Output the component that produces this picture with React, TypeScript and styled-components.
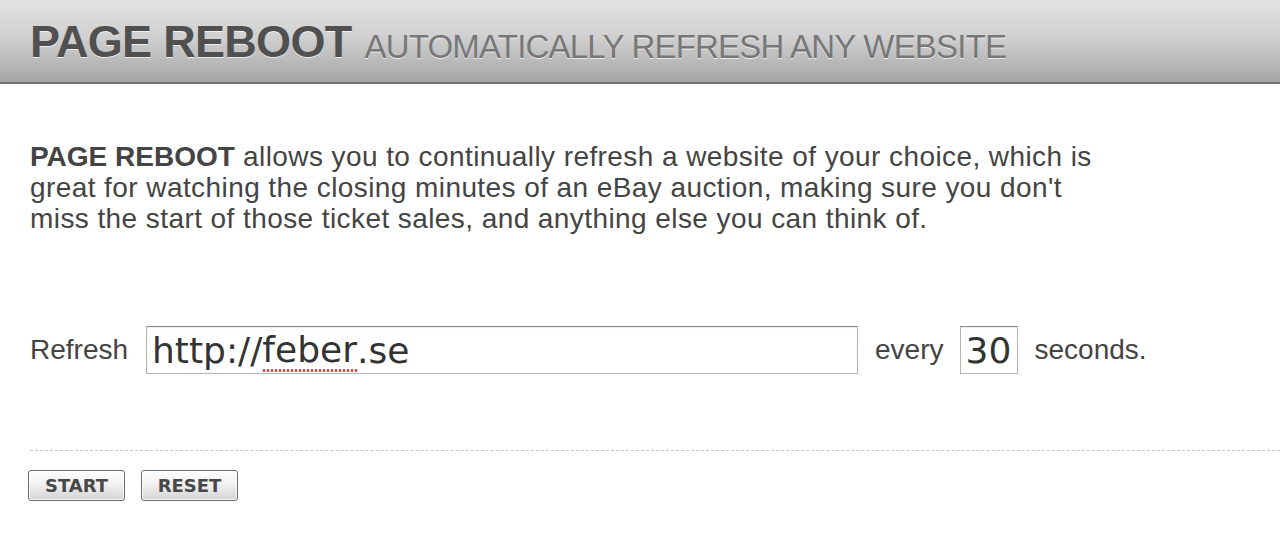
import React from "react";
import styled, { createGlobalStyle } from "styled-components";

const Global = createGlobalStyle`
  html, body { margin: 0; padding: 0; background: #fff; }
  body { font-family: "Liberation Sans", Arial, sans-serif; color: #444; }
`;

const Header = styled.header`
  height: 84px;
  box-sizing: border-box;
  background: linear-gradient(to bottom, #e2e2e1 0%, #d0d0d0 45%, #a6a6a6 100%);
  border-bottom: 2px solid #707070;
  display: flex;
  align-items: flex-end;
  padding: 0 0 18px 30px;
  gap: 13px;
`;

const Title = styled.h1`
  margin: 0;
  font-family: "Liberation Sans", Arial, sans-serif;
  font-weight: bold;
  font-size: 45px;
  line-height: 1;
  letter-spacing: -0.7px;
  color: #505050;
  text-shadow: 0 1px 0 rgba(255, 255, 255, 0.7);
`;

const Subtitle = styled.span`
  font-family: "Liberation Sans", Arial, sans-serif;
  font-size: 33px;
  line-height: 1;
  letter-spacing: -0.8px;
  color: #777;
  padding-bottom: 1px;
  text-shadow: 0 1px 0 rgba(255, 255, 255, 0.7);
`;

const Main = styled.main`
  padding: 57px 30px 0 30px;
`;

const Intro = styled.p`
  margin: 0;
  font-size: 28px;
  line-height: 31px;
  color: #444;
  letter-spacing: 0.42px;
  white-space: pre-line;
`;

const Strong = styled.b`
  letter-spacing: 0;
`;

const Form = styled.div`
  display: flex;
  align-items: center;
  margin-top: 92px;
  font-size: 28px;
  color: #444;
`;

const Label = styled.span<{ $gap: number }>`
  margin-right: ${(p) => p.$gap}px;
`;

const Field = styled.div<{ $width: number }>`
  box-sizing: border-box;
  width: ${(p) => p.$width}px;
  height: 48px;
  border: 1px solid #b4b4b4;
  border-top-color: #8a8a8a;
  box-shadow: inset 0 1px 1px rgba(0, 0, 0, 0.08);
  background: #fff;
  display: flex;
  align-items: center;
  padding: 0 5px;
  font-family: "DejaVu Sans", Verdana, sans-serif;
  font-size: 36px;
  color: #333;
  margin-right: 17px;
  white-space: nowrap;
`;

const Misspelled = styled.span`
  background-image: radial-gradient(circle, #ff3b3b 1.1px, transparent 1.6px);
  background-repeat: repeat-x;
  background-position: 0 100%;
  background-size: 4px 3px;
  padding-bottom: 2px;
`;

const Divider = styled.hr`
  border: 0;
  border-top: 1px dashed #c8c8c8;
  margin: 76px -30px 0 0;
`;

const Buttons = styled.div`
  display: flex;
  gap: 18px;
  margin-top: 19px;
`;

const Button = styled.button`
  box-sizing: border-box;
  height: 31px;
  width: 97px;
  margin-left: -2px;
  border: 1px solid #6c6c6c;
  border-radius: 3px;
  background: linear-gradient(to bottom, #ffffff 0%, #f1f1f1 45%, #d4d4d4 100%);
  box-shadow: inset 0 0 0 1px rgba(255, 255, 255, 0.8);
  font-family: "DejaVu Sans", Verdana, sans-serif;
  font-weight: bold;
  font-size: 18px;
  color: #484848;
  padding: 0;
  cursor: pointer;
`;

export default function App() {
  return (
    <>
      <Global />
      <Header>
        <Title>PAGE REBOOT</Title>
        <Subtitle>AUTOMATICALLY REFRESH ANY WEBSITE</Subtitle>
      </Header>
      <Main>
        <Intro>
          <Strong>PAGE REBOOT</Strong>
          {" allows you to continually refresh a website of your choice, which is\ngreat for watching the closing minutes of an eBay auction, making sure you don't\nmiss the start of those ticket sales, and anything else you can think of."}
        </Intro>
        <Form>
          <Label $gap={18}>Refresh</Label>
          <Field $width={712} role="textbox">
            http://<Misspelled>feber</Misspelled>.se
          </Field>
          <Label $gap={16}>every</Label>
          <Field $width={58} role="textbox">30</Field>
          <Label $gap={0}>seconds.</Label>
        </Form>
        <Divider />
        <Buttons>
          <Button>START</Button>
          <Button>RESET</Button>
        </Buttons>
      </Main>
    </>
  );
}
